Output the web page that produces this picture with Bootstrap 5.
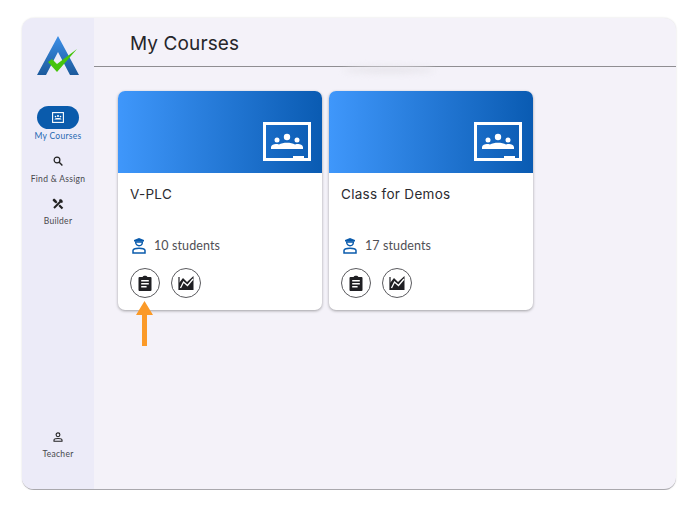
<!DOCTYPE html>
<html lang="en">
<head>
<meta charset="utf-8">
<meta name="viewport" content="width=device-width, initial-scale=1">
<title>My Courses</title>
<link href="https://cdn.jsdelivr.net/npm/bootstrap@5.3.3/dist/css/bootstrap.min.css" rel="stylesheet">
<style>
body { background: #fff; font-family: "Lato", sans-serif; }
.app-frame { position: relative; width: 654px; height: 472px; margin: 18px 0 0 22px; background: #f4f2f9; border-radius: 12px; border-bottom: 1px solid #a9a8ad; box-shadow: 0 0 2px rgba(0,0,0,.15); overflow: hidden; }
.side-rail { width: 72px; background: #ecebf8; padding-top: 18px; }
.logo-box { height: 40px; margin-bottom: 30px; }
.rail-item { font-size: 8.5px; line-height: 11px; letter-spacing: .3px; color: #47474c; height: 42.5px; white-space: nowrap; }
.rail-item svg { display: block; }
.rail-pill { width: 42px; height: 23px; background: #0a5bac; border-radius: 12px; margin-bottom: 2px; }
.rail-icon { height: 25px; }
.rail-active { color: #1f68b2; }
.rail-bottom { margin-top: auto; height: 65px; }
.page-title { position: relative; height: 49px; border-bottom: 1px solid #8f8e92; padding: 13px 0 0 36px; font-family: "Inter", sans-serif; font-size: 19px; line-height: 26px; color: #26262a; letter-spacing: .1px; }
.title-smudge { position: absolute; left: 250px; bottom: -7px; width: 90px; height: 6px; border-radius: 50%; background: #e6e4ea; filter: blur(3px); }
.course-area { padding: 24px 0 0 24px; gap: 7px; }
.course-box { width: 204px; height: 219px; border: 0; border-radius: 7px; background: #fff; box-shadow: 0 1px 3px rgba(0,0,0,.35); overflow: hidden; }
.course-banner { height: 82px; background: linear-gradient(90deg, #3f97fb 0%, #0a5bb2 100%); padding: 31px 11px 0 0; }
.course-name { font-family: "Inter", sans-serif; font-size: 13.5px; line-height: 18px; color: #2b2b30; padding: 12px 12px 0; height: 56px; letter-spacing: .3px; }
.course-count { font-size: 12.5px; line-height: 16px; color: #505055; padding: 9px 0 0 14px; gap: 8px; letter-spacing: .1px; }
.course-actions { padding: 14px 0 0 12px; gap: 11px; }
.round-btn { width: 30px; height: 30px; border: 1px solid #5a5a5e; border-radius: 50%; background: #fff; padding: 0; }
.pointer-arrow { position: absolute; left: 114px; top: 283px; }
</style>
</head>
<body>
<div class="app-frame d-flex">
  <!-- side rail -->
  <div class="side-rail d-flex flex-column align-items-center flex-shrink-0">
    <div class="logo-box">
      <svg width="42" height="40" viewBox="0 0 42 40">
        <defs><linearGradient id="logoBlue" x1="0" y1="0" x2="0" y2="1"><stop offset="0" stop-color="#3d8fe8"/><stop offset="1" stop-color="#1c5a9c"/></linearGradient></defs>
        <path d="M21 0 L42 39 L33 39 L21 16 L9 39 L0 39 Z" fill="url(#logoBlue)"/>
        <path d="M11 26 L15 23 L20 28 L40 13 L20 36 Z" fill="#46c40c"/>
      </svg>
    </div>
    <div class="rail-item rail-active d-flex flex-column align-items-center">
      <div class="rail-pill d-flex align-items-center justify-content-center">
        <svg width="12" height="11" viewBox="0 0 12 11"><rect x=".6" y=".6" width="10.8" height="9.8" fill="none" stroke="#fff" stroke-width="1.1"/><circle cx="6" cy="4" r="1" fill="#fff"/><circle cx="3.5" cy="4.6" r=".8" fill="#fff"/><circle cx="8.5" cy="4.6" r=".8" fill="#fff"/><path d="M2.4 7.4 C3 5.6 9 5.6 9.6 7.4 Z" fill="#fff"/></svg>
      </div>
      <span>My Courses</span>
    </div>
    <div class="rail-item d-flex flex-column align-items-center">
      <div class="rail-icon d-flex align-items-center justify-content-center">
        <svg width="10" height="10" viewBox="0 0 10 10"><circle cx="4" cy="4" r="2.9" fill="none" stroke="#222" stroke-width="1.2"/><path d="M6.2 6.2 L9.4 9.4" stroke="#222" stroke-width="1.4"/></svg>
      </div>
      <span>Find &amp; Assign</span>
    </div>
    <div class="rail-item d-flex flex-column align-items-center">
      <div class="rail-icon d-flex align-items-center justify-content-center">
        <svg width="12" height="12" viewBox="0 0 12 12"><path d="M1.5 1.5 L10.5 10.5" stroke="#222" stroke-width="2.2"/><path d="M10 2 L2 10" stroke="#ecebf8" stroke-width="3.2"/><path d="M10 2 L2 10" stroke="#222" stroke-width="2"/><path d="M.5 2 L2 .5 L4.5 2.5 L2.5 4.5 Z" fill="#222"/><path d="M8 .8 L11.2 4 L9.5 5 L7 2.5 Z" fill="#222"/></svg>
      </div>
      <span>Builder</span>
    </div>
    <div class="rail-item rail-bottom d-flex flex-column align-items-center">
      <div class="rail-icon d-flex align-items-center justify-content-center">
        <svg width="10" height="10" viewBox="0 0 10 10"><circle cx="5" cy="2.8" r="1.9" fill="none" stroke="#222" stroke-width="1.1"/><path d="M1 9.3 V8 C1 6 9 6 9 8 V9.3 Z" fill="none" stroke="#222" stroke-width="1.1"/></svg>
      </div>
      <span>Teacher</span>
    </div>
  </div>

  <!-- main -->
  <div class="flex-grow-1">
    <div class="page-title">My Courses<div class="title-smudge"></div></div>
    <div class="course-area d-flex">
      <div class="card course-box">
        <div class="course-banner d-flex justify-content-end">
          <svg width="48" height="39" viewBox="0 0 48 39"><use href="#boardIcon"/></svg>
        </div>
        <div class="course-name">V-PLC</div>
        <div class="course-count d-flex align-items-center">
          <svg width="14" height="16" viewBox="0 0 14 16"><use href="#studentIcon"/></svg><span>10 students</span>
        </div>
        <div class="course-actions d-flex">
          <button class="round-btn d-flex align-items-center justify-content-center" type="button"><svg width="14" height="16" viewBox="0 0 14 16"><use href="#clipIcon"/></svg></button>
          <button class="round-btn d-flex align-items-center justify-content-center" type="button"><svg width="17" height="15" viewBox="0 0 17 15"><use href="#chartIcon"/></svg></button>
        </div>
      </div>
      <div class="card course-box">
        <div class="course-banner d-flex justify-content-end">
          <svg width="48" height="39" viewBox="0 0 48 39"><use href="#boardIcon"/></svg>
        </div>
        <div class="course-name">Class for Demos</div>
        <div class="course-count d-flex align-items-center">
          <svg width="14" height="16" viewBox="0 0 14 16"><use href="#studentIcon"/></svg><span>17 students</span>
        </div>
        <div class="course-actions d-flex">
          <button class="round-btn d-flex align-items-center justify-content-center" type="button"><svg width="14" height="16" viewBox="0 0 14 16"><use href="#clipIcon"/></svg></button>
          <button class="round-btn d-flex align-items-center justify-content-center" type="button"><svg width="17" height="15" viewBox="0 0 17 15"><use href="#chartIcon"/></svg></button>
        </div>
      </div>
    </div>
  </div>

  <!-- annotation arrow -->
  <svg class="pointer-arrow" width="17" height="45" viewBox="0 0 17 45"><path d="M8.5 0 L17 14 L11 14 L11 45 L6 45 L6 14 L0 14 Z" fill="#fb9a28"/></svg>
</div>

<!-- shared icons -->
<svg width="0" height="0" class="d-block">
  <symbol id="boardIcon" viewBox="0 0 48 39">
    <path fill-rule="evenodd" d="M0 0 H48 V39 H0 Z M3 3 V36 H45 V3 Z" fill="#fff"/>
    <rect x="30" y="34" width="11" height="3" fill="#fff"/>
    <circle cx="24" cy="15" r="3.2" fill="#fff"/><circle cx="14" cy="18" r="2.5" fill="#fff"/><circle cx="34" cy="18" r="2.5" fill="#fff"/>
    <path d="M8 27 V25 C9 22 12.500 21.500 16 22.500 C20 20 28 20 32 22.500 C35.500 21.500 39 22 40 25 V27 Z" fill="#fff"/>
  </symbol>
  <symbol id="studentIcon" viewBox="0 0 14 16">
    <path d="M7 0 L12 2 L12 3.400 L2 3.400 L2 2 Z" fill="#0a5bac"/>
    <path d="M3.600 4 H10.400 C10.400 9 3.600 9 3.600 4 Z" fill="none" stroke="#0a5bac" stroke-width="1.300"/>
    <path d="M1 15 V12.600 C1 9.500 13 9.500 13 12.600 V15 Z" fill="none" stroke="#0a5bac" stroke-width="1.500"/>
  </symbol>
  <symbol id="clipIcon" viewBox="0 0 14 16">
    <path fill-rule="evenodd" d="M1.500 2 H4.600 C5 .3 9 .3 9.400 2 H12.500 A1 1 0 0 1 13.500 3 V15 A1 1 0 0 1 12.500 16 H1.500 A1 1 0 0 1 .5 15 V3 A1 1 0 0 1 1.500 2 Z M3.200 5 V6.400 H10.800 V5 Z M3.200 8 V9.400 H10.800 V8 Z M3.200 11 V12.400 H8.600 V11 Z" fill="#1f1f23"/>
  </symbol>
  <symbol id="chartIcon" viewBox="0 0 17 15">
    <path d="M1 7 L5 2 L9 6 L15.500 0 V14 H1 Z" fill="#1f1f23"/>
    <path d="M1 1 V14" stroke="#1f1f23" stroke-width="1.200"/>
    <path d="M2.500 12 L5.500 6 L9.500 9.500 L15 3" fill="none" stroke="#fff" stroke-width="1.300"/>
  </symbol>
</svg>
<script src="https://cdn.jsdelivr.net/npm/bootstrap@5.3.3/dist/js/bootstrap.bundle.min.js"></script>
</body>
</html>
